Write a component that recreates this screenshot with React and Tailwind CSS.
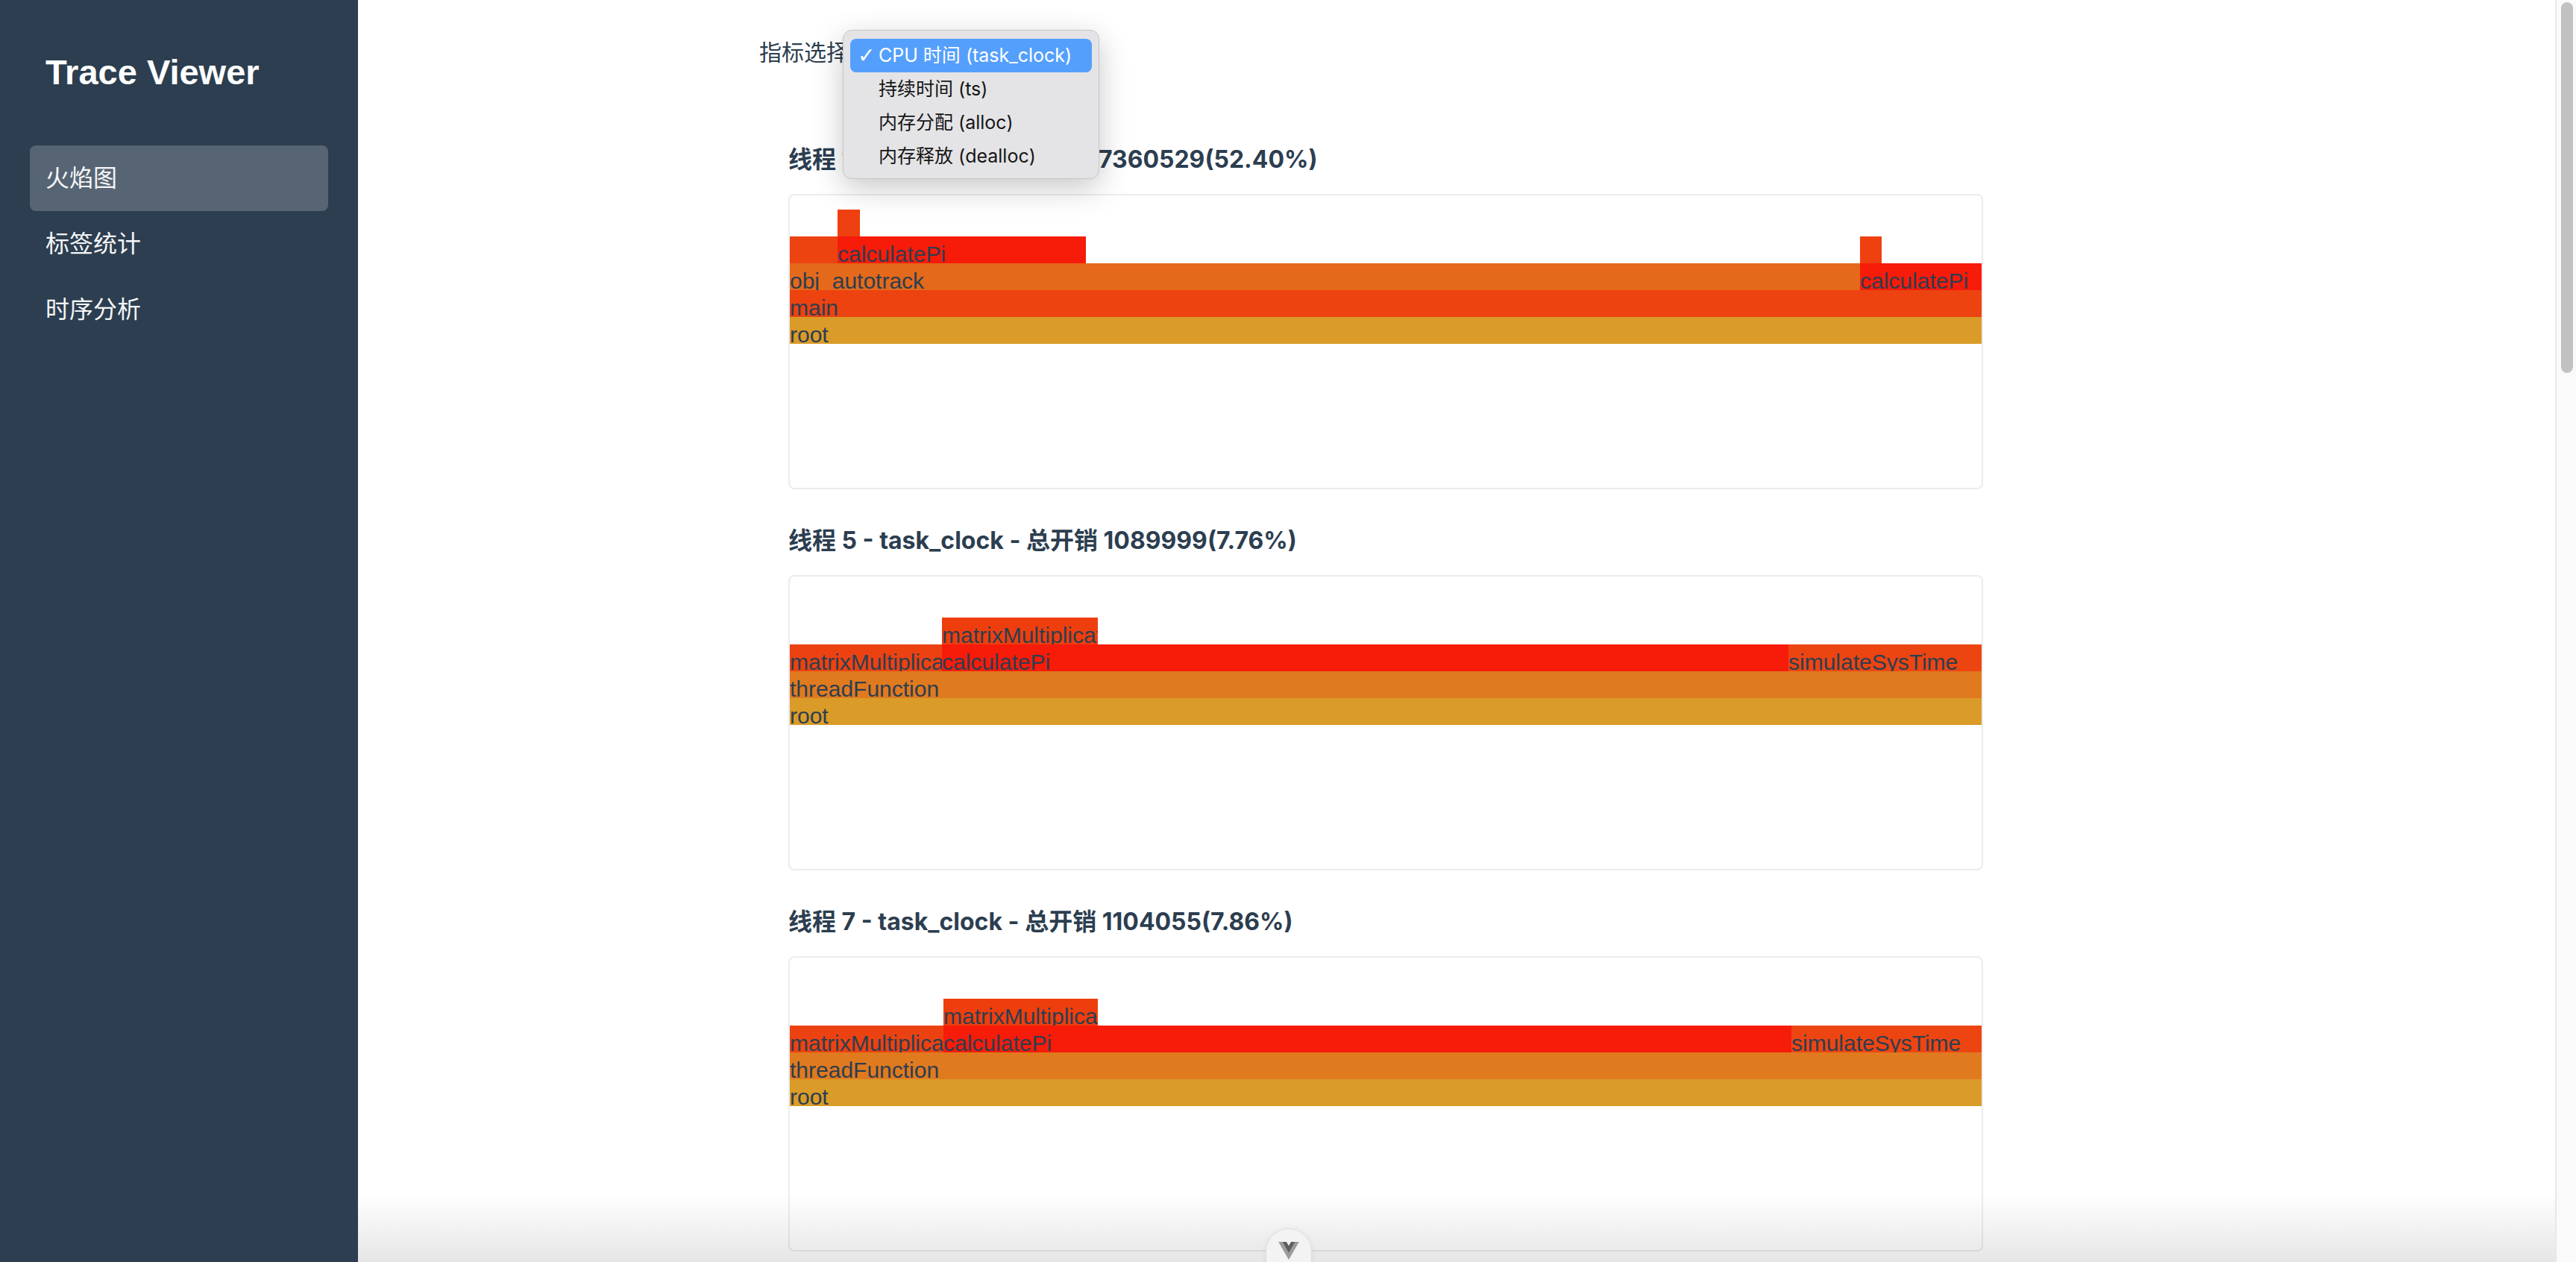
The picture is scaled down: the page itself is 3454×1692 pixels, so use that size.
const RED = '#f71b09';
const ORANGE_RED = '#ec4311';

const charts = [
  {
    title: '线程 1 - task_clock - 总开销 7360529(52.40%)',
    rows: [
      [{ gap: 64 }, { w: 30, color: '#ee4010' }],
      [{ w: 64, color: ORANGE_RED }, { w: 333, color: RED, label: 'calculatePi' }, { gap: 1038 }, { w: 29, color: '#ef4010' }],
      [{ w: 1435, color: '#e4691a', label: 'obj_autotrack' }, { w: 163, color: RED, label: 'calculatePi' }],
      [{ w: 1598, color: ORANGE_RED, label: 'main' }],
      [{ w: 1598, color: '#da9b28', label: 'root' }],
    ],
  },
  {
    title: '线程 5 - task_clock - 总开销 1089999(7.76%)',
    rows: [
      [{ gap: 204 }, { w: 209, color: '#ee3e0e', label: 'matrixMultiplication' }],
      [
        { w: 204, color: '#ec4211', label: 'matrixMultiplication' },
        { w: 1135, color: RED, label: 'calculatePi' },
        { w: 259, color: '#ed4512', label: 'simulateSysTime' },
      ],
      [{ w: 1598, color: '#e07a1f', label: 'threadFunction' }],
      [{ w: 1598, color: '#da9b28', label: 'root' }],
    ],
  },
  {
    title: '线程 7 - task_clock - 总开销 1104055(7.86%)',
    rows: [
      [{ gap: 206 }, { w: 207, color: '#ee3e0e', label: 'matrixMultiplication' }],
      [
        { w: 206, color: '#ec4211', label: 'matrixMultiplication' },
        { w: 1137, color: RED, label: 'calculatePi' },
        { w: 255, color: '#ed4512', label: 'simulateSysTime' },
      ],
      [{ w: 1598, color: '#e07a1f', label: 'threadFunction' }],
      [{ w: 1598, color: '#da9b28', label: 'root' }],
    ],
  },
];

const metrics = ['CPU 时间 (task_clock)', '持续时间 (ts)', '内存分配 (alloc)', '内存释放 (dealloc)'];

function FlameRow({ segments }) {
  return (
    <div className="flex h-[36px]">
      {segments.map((seg, i) =>
        seg.gap ? (
          <div key={i} className="shrink-0" style={{ width: seg.gap }} />
        ) : (
          <div
            key={i}
            className="h-[36px] shrink-0 overflow-hidden whitespace-nowrap pt-[6px] font-['Liberation_Sans',sans-serif] text-[30px] leading-[36px] text-[#2c3e50]"
            style={{ width: seg.w, backgroundColor: seg.color }}
          >
            {seg.label}
          </div>
        )
      )}
    </div>
  );
}

function FlameChart({ chart }) {
  return (
    <section className="flex flex-col">
      <h3 className="mb-[26px] h-[40px] whitespace-nowrap text-[32px] font-bold leading-[40px] text-[#2c3e50]">
        {chart.title}
      </h3>
      <div className="h-[396px] w-[1602px] overflow-hidden rounded-[8px] border-2 border-[#ececec] bg-white">
        <div className="flex h-[199px] flex-col justify-end">
          {chart.rows.map((row, i) => (
            <FlameRow key={i} segments={row} />
          ))}
        </div>
      </div>
    </section>
  );
}

function VueLogo() {
  return (
    <svg width="28" height="24" viewBox="0 0 261.76 226.69">
      <path d="M161.096.001l-30.225 52.351L100.647.001H-.005l130.877 226.688L261.749.001z" fill="#9c9c9c" />
      <path d="M161.096.001l-30.225 52.351L100.647.001H52.346l78.526 136.01L209.398.001z" fill="#5e5e5e" />
    </svg>
  );
}

export default function App() {
  return (
    <div className="relative flex h-[1692px] w-full overflow-hidden bg-white font-['Inter','Noto_Sans_CJK_SC',sans-serif]">
      <aside className="w-[480px] shrink-0 bg-[#2c3e50] px-[40px] text-[#f4f6f8]">
        <h1 className="pl-[21px] pt-[68px] font-['Liberation_Sans',sans-serif] text-[47px] font-bold leading-[58px] text-white">
          Trace Viewer
        </h1>
        <nav className="mt-[69px] flex flex-col">
          {['火焰图', '标签统计', '时序分析'].map((item, i) => (
            <div
              key={item}
              className={`flex h-[88px] items-center rounded-[8px] pl-[21px] text-[32px] ${i === 0 ? 'bg-white/20' : ''}`}
            >
              {item}
            </div>
          ))}
        </nav>
      </aside>

      <main className="flex min-w-0 flex-1 flex-col pl-[538px] pt-[50px]">
        <div className="flex h-[40px] items-center text-[30px] text-[#2c3e50]">指标选择</div>
        <div className="ml-[39px] mt-[104px] flex flex-col gap-[49px]">
          {charts.map((chart, i) => (
            <FlameChart key={i} chart={chart} />
          ))}
        </div>
      </main>

      <div className="w-[28px] shrink-0 border-l-2 border-[#e8e8e8] bg-[#fafafa] pl-[6px] pt-[3px]">
        <div className="h-[497px] w-[16px] rounded-full bg-[#c1c1c1]" />
      </div>

      {/* native select popup, open */}
      <div className="absolute left-[1130px] top-[40px] w-[344px] rounded-[12px] border border-[#c6c6c8] bg-[#e4e4e6] px-[9px] pb-[7px] pt-[11px] text-[25px] text-[#161616] shadow-[0_12px_40px_rgba(0,0,0,0.22)]">
        {metrics.map((m, i) => (
          <div
            key={m}
            className={`flex h-[45px] items-center rounded-[8px] pl-[10px] ${i === 0 ? 'bg-[#559ffc] text-white' : ''}`}
          >
            <span className="w-[28px] font-['DejaVu_Sans',sans-serif] text-[28px] font-bold">{i === 0 ? '✓' : ''}</span>
            <span>{m}</span>
          </div>
        ))}
      </div>

      <div className="pointer-events-none absolute bottom-0 left-[480px] right-[28px] h-[92px] bg-linear-to-b from-transparent to-black/10" />

      <div className="absolute left-[1697px] top-[1647px] flex h-[60px] w-[62px] justify-center rounded-t-full border border-[#e0e0e0] bg-[#f3f3f3] pt-[17px] shadow-[0_0_8px_rgba(0,0,0,0.06)]">
        <VueLogo />
      </div>
    </div>
  );
}
